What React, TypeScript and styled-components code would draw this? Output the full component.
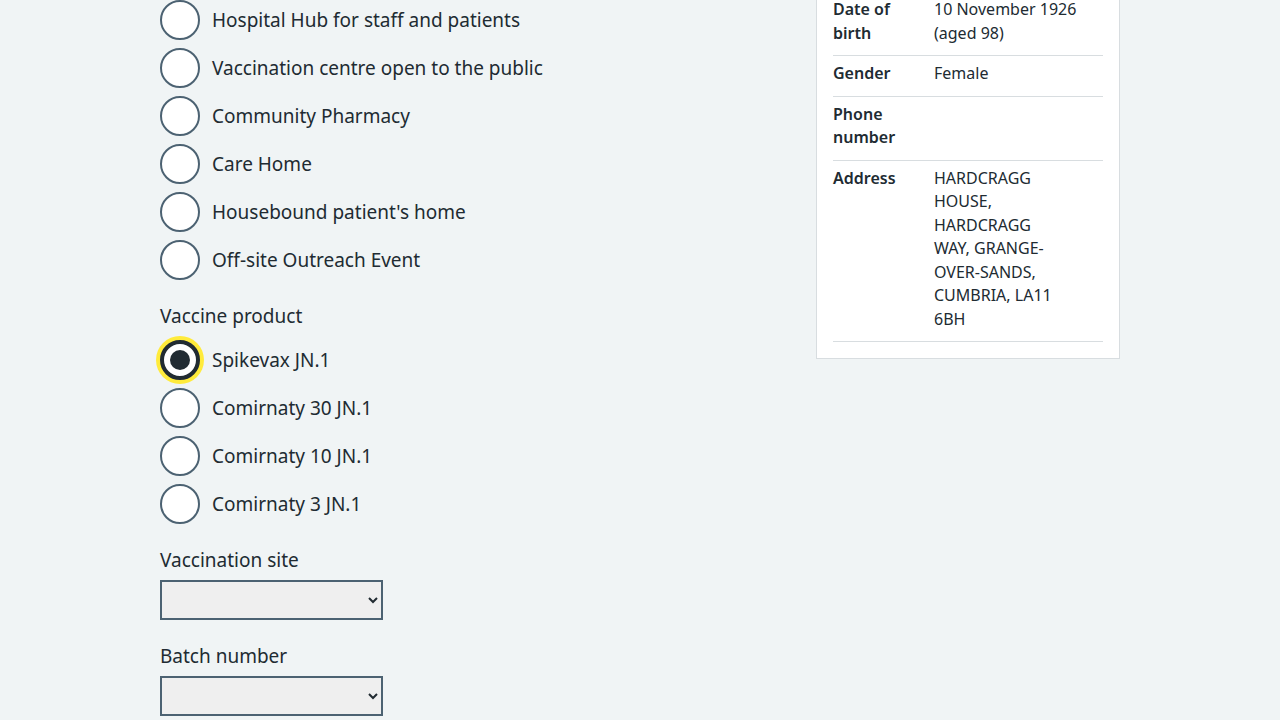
import React from "react";
import styled, { createGlobalStyle, css } from "styled-components";

const Global = createGlobalStyle`
  html, body { margin: 0; padding: 0; background: #f0f4f5; }
  body {
    font-family: "Noto Sans", "Open Sans", sans-serif;
    color: #212b32;
    overflow: hidden;
  }
  * { box-sizing: border-box; }
`;

const Page = styled.div`
  width: 960px;
  margin: 0 auto;
  display: grid;
  grid-template-columns: 1fr 304px;
  column-gap: 32px;
  align-items: start;
`;

const FormColumn = styled.div`
  display: flex;
  flex-direction: column;
`;

const FormGroup = styled.div`
  display: flex;
  flex-direction: column;
  margin-bottom: 22px;
`;

const Legend = styled.div`
  font-size: 19px;
  line-height: 28px;
  margin-bottom: 10px;
`;

const FieldLabel = styled.label`
  font-size: 19px;
  line-height: 28px;
  margin-bottom: 6px;
`;

const RadioList = styled.div`
  display: flex;
  flex-direction: column;
  gap: 8px;
`;

const RadioItem = styled.label`
  display: flex;
  align-items: center;
  gap: 12px;
  height: 40px;
  cursor: pointer;
`;

const HiddenInput = styled.input`
  position: absolute;
  opacity: 0;
  width: 1px;
  height: 1px;
  margin: 0;
`;

const Circle = styled.span<{ $checked?: boolean }>`
  flex: none;
  width: 40px;
  height: 40px;
  border-radius: 50%;
  background: #ffffff;
  border: 2px solid #4c6272;
  display: flex;
  align-items: center;
  justify-content: center;
  ${(p) =>
    p.$checked &&
    css`
      border: 4px solid #212b32;
      box-shadow: 0 0 0 4px #ffeb3b;
      &::after {
        content: "";
        width: 20px;
        height: 20px;
        border-radius: 50%;
        background: #212b32;
      }
    `}
`;

const RadioText = styled.span`
  font-size: 19px;
  line-height: 28px;
`;

const Select = styled.select`
  width: 223px;
  height: 40px;
  border: 2px solid #4c6272;
  border-radius: 0;
  background-color: #efefef;
  font-family: "Noto Sans", sans-serif;
  font-size: 16px;
  color: #212b32;
  padding: 0 4px;
`;

const Card = styled.div`
  margin-top: -25px;
  background: #ffffff;
  border: 1px solid #d8dde0;
  padding: 16px;
`;

const SummaryRow = styled.div`
  display: grid;
  grid-template-columns: 77px 146px;
  column-gap: 24px;
  padding: 6px 0 10px;
  border-bottom: 1px solid #d8dde0;
  font-size: 16px;
  line-height: 23.5px;
`;

const Key = styled.div`
  font-weight: 600;
`;

const Value = styled.div`
  font-weight: 400;
`;

const ValueLine = styled.span`
  display: block;
`;

type RadioProps = { name: string; label: string; checked?: boolean };

function Radio({ name, label, checked }: RadioProps) {
  return (
    <RadioItem>
      <HiddenInput type="radio" name={name} defaultChecked={checked} />
      <Circle $checked={checked} />
      <RadioText>{label}</RadioText>
    </RadioItem>
  );
}

const settings = [
  "Hospital Hub for staff and patients",
  "Vaccination centre open to the public",
  "Community Pharmacy",
  "Care Home",
  "Housebound patient's home",
  "Off-site Outreach Event",
];

const products = ["Spikevax JN.1", "Comirnaty 30 JN.1", "Comirnaty 10 JN.1", "Comirnaty 3 JN.1"];

const details: [string, string[]][] = [
  ["Date of birth", ["10 November 1926", "(aged 98)"]],
  ["Gender", ["Female"]],
  ["Phone number", []],
  [
    "Address",
    ["HARDCRAGG", "HOUSE,", "HARDCRAGG", "WAY, GRANGE-", "OVER-SANDS,", "CUMBRIA, LA11", "6BH"],
  ],
];

export default function App() {
  return (
    <>
      <Global />
      <Page>
        <FormColumn>
          <FormGroup>
            <RadioList>
              {settings.map((s) => (
                <Radio key={s} name="setting" label={s} />
              ))}
            </RadioList>
          </FormGroup>
          <FormGroup>
            <Legend>Vaccine product</Legend>
            <RadioList>
              {products.map((p, i) => (
                <Radio key={p} name="product" label={p} checked={i === 0} />
              ))}
            </RadioList>
          </FormGroup>
          <FormGroup>
            <FieldLabel htmlFor="site">Vaccination site</FieldLabel>
            <Select id="site">
              <option value=""></option>
            </Select>
          </FormGroup>
          <FormGroup>
            <FieldLabel htmlFor="batch">Batch number</FieldLabel>
            <Select id="batch">
              <option value=""></option>
            </Select>
          </FormGroup>
        </FormColumn>
        <Card>
          {details.map(([k, lines]) => (
            <SummaryRow key={k}>
              <Key>{k}</Key>
              <Value>
                {lines.map((l, i) => (
                  <ValueLine key={i}>{l}</ValueLine>
                ))}
              </Value>
            </SummaryRow>
          ))}
        </Card>
      </Page>
    </>
  );
}
